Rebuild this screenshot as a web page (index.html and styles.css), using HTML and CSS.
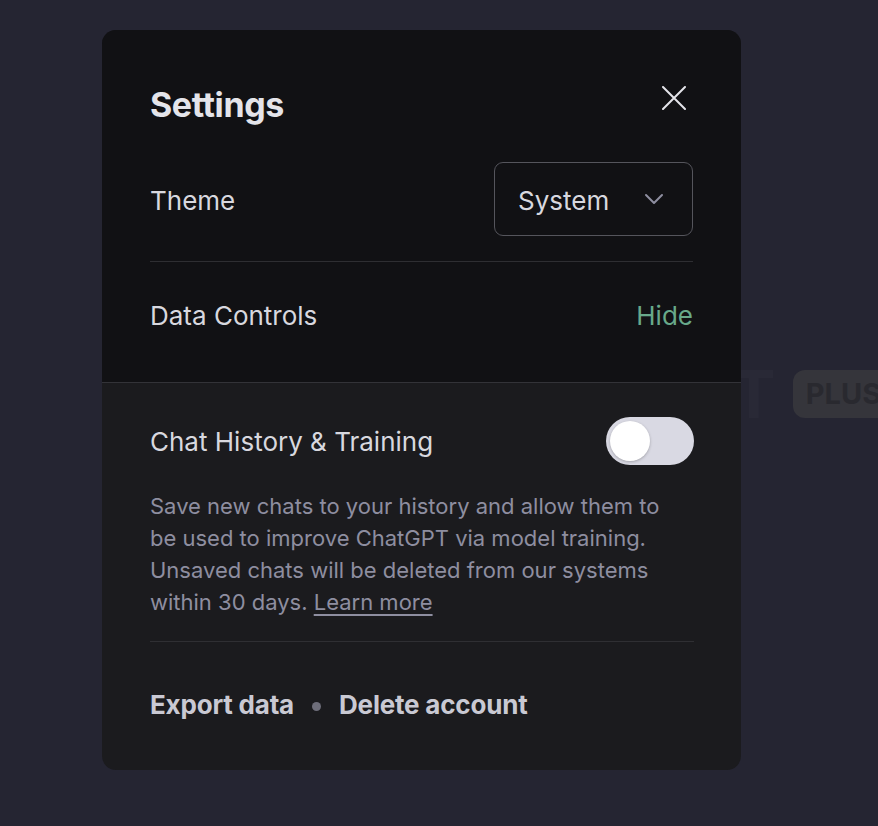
FILE: index.html
```html
<!DOCTYPE html>
<html lang="en">
<head>
<meta charset="utf-8">
<title>Settings</title>
<link rel="stylesheet" href="styles.css">
</head>
<body>
<div class="backdrop-content">
  <span class="hero-title">ChatGPT</span>
  <span class="plus-badge">PLUS</span>
</div>

<div class="modal" role="dialog" aria-label="Settings">
  <div class="top">
    <div class="header">
      <h2 class="title">Settings</h2>
      <button class="close" aria-label="Close">
        <svg width="24" height="24" viewBox="0 0 24 24" fill="none" stroke="currentColor" stroke-width="2" stroke-linecap="round"><path d="M1 1L23 23M23 1L1 23"/></svg>
      </button>
    </div>
    <div class="row theme-row">
      <span class="label">Theme</span>
      <div class="select">
        <span>System</span>
        <svg width="20" height="12" viewBox="0 0 20 12" fill="none" stroke="currentColor" stroke-width="2" stroke-linecap="round" stroke-linejoin="round"><path d="M2 2L10 10L18 2"/></svg>
      </div>
    </div>
    <div class="row data-row">
      <span class="label">Data Controls</span>
      <span class="hide-link">Hide</span>
    </div>
  </div>
  <div class="bottom">
    <div class="row history-row">
      <span class="label">Chat History &amp; Training</span>
      <span class="toggle"><span class="knob"></span></span>
    </div>
    <div class="desc-wrap">
      <p class="desc">Save new chats to your history and allow them to be used to improve ChatGPT via model training. Unsaved chats will be deleted from our systems within 30 days. <a href="#" class="learn">Learn more</a></p>
    </div>
    <div class="actions">
      <span class="action">Export data</span>
      <span class="dot"></span>
      <span class="action">Delete account</span>
    </div>
  </div>
</div>
</body>
</html>
```

FILE: styles.css
```css
* { box-sizing: border-box; }
html, body {
  margin: 0;
  padding: 0;
  width: 878px;
  height: 826px;
  overflow: hidden;
}
body {
  background: #252532;
  font-family: "Inter", "Liberation Sans", sans-serif;
  position: relative;
}

.backdrop-content {
  position: absolute;
  top: 368px;
  left: 487px;
  display: flex;
  align-items: center;
  gap: 17px;
  white-space: nowrap;
}
.hero-title {
  font-size: 66px;
  font-weight: 700;
  color: #292936;
  line-height: 52px;
}
.plus-badge {
  background: #35353b;
  color: #29292f;
  font-size: 29px;
  font-weight: 700;
  padding: 6px 14px 6px 13px;
  border-radius: 12px;
  line-height: 36px;
}

.modal {
  position: absolute;
  top: 30px;
  left: 102px;
  width: 639px;
  height: 740px;
  border-radius: 14px;
  overflow: hidden;
  background: #1b1b1e;
  display: flex;
  flex-direction: column;
}
.top {
  background: #111114;
  padding: 53px 48px 0;
  border-bottom: 1px solid #333338;
}
.header {
  display: flex;
  justify-content: space-between;
  align-items: center;
  height: 42px;
}
.title {
  margin: 0;
  font-size: 34px;
  font-weight: 700;
  color: #e4e4ea;
  letter-spacing: -0.4px;
}
.close {
  background: none;
  border: 0;
  padding: 0;
  color: #e4e4ea;
  margin-right: 7px;
  margin-top: -12px;
  display: flex;
}
.row {
  display: flex;
  justify-content: space-between;
  align-items: center;
}
.label {
  font-size: 26px;
  color: #d8d8df;
  line-height: 32px;
}
.theme-row {
  margin-top: 37px;
  padding-bottom: 25px;
  border-bottom: 1px solid #2e2e32;
}
.theme-row .label { margin-top: 3px; }
.select {
  width: 199px;
  height: 74px;
  border: 1.5px solid #55555c;
  border-radius: 9px;
  display: flex;
  align-items: center;
  justify-content: space-between;
  padding: 0 28px 0 23px;
  font-size: 26px;
  color: #d8d8df;
}
.select span { margin-top: 2px; }
.select svg { color: #8e8ea0; }
.data-row {
  padding: 38px 0 50px;
}
.hide-link {
  font-size: 26px;
  color: #68a98a;
  line-height: 32px;
}

.bottom {
  padding: 34px 47px 0 48px;
}
.history-row .label { margin-top: 2px; }
.toggle {
  width: 88px;
  height: 48px;
  border-radius: 24px;
  background: #d9d9e3;
  display: flex;
  align-items: center;
  padding: 0 4px;
}
.knob {
  width: 40px;
  height: 40px;
  border-radius: 50%;
  background: #ffffff;
  box-shadow: 0 1px 3px rgba(0,0,0,0.25);
}
.desc-wrap {
  margin-top: 25px;
  padding-bottom: 23px;
  border-bottom: 1px solid #2f2f33;
}
.desc {
  margin: 0;
  max-width: 528px;
  font-size: 22px;
  line-height: 32px;
  color: #8e8ea0;
}
.learn {
  color: #8e8ea0;
  text-decoration: underline;
  text-underline-offset: 4px;
}
.actions {
  display: flex;
  align-items: center;
  padding-top: 47px;
}
.action {
  font-size: 26px;
  font-weight: 700;
  color: #c9c9d3;
  line-height: 32px;
  letter-spacing: -0.2px;
}
.dot {
  width: 9px;
  height: 9px;
  border-radius: 50%;
  background: #6e6e7a;
  margin: 2px 18px 0 18px;
}
```
